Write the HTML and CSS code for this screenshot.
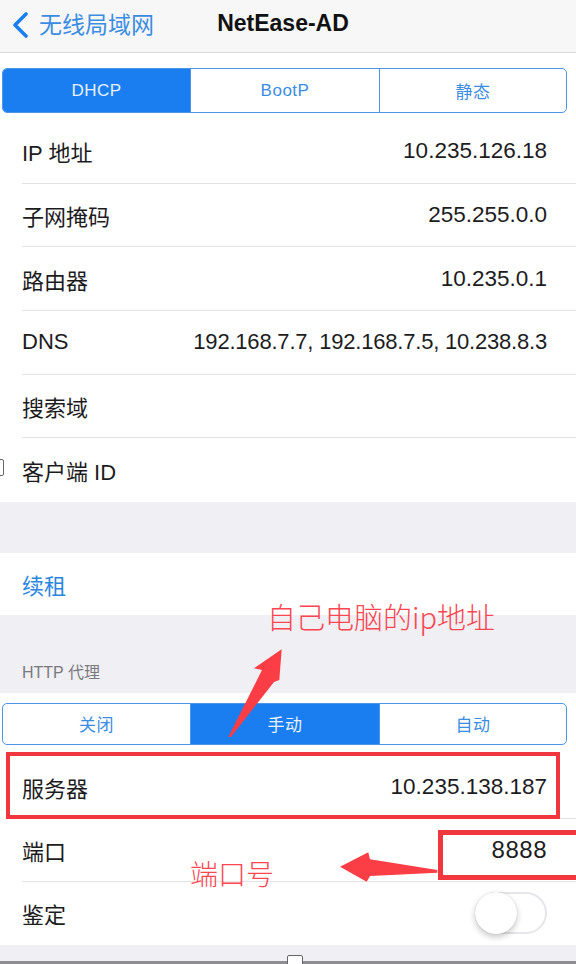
FILE: index.html
```html
<!DOCTYPE html>
<html lang="zh-CN">
<head>
    <meta charset="UTF-8" />
    <meta name="viewport" content="width=device-width, initial-scale=1.0" />
    <title>NetEase-AD</title>
    <link rel="stylesheet" href="styles.css">
</head>
<body>
    <div class="screen">

        <header class="nav">
            <a class="back" href="#">
                <svg class="chevron" width="18" height="26" viewBox="0 0 18 26">
                    <polyline points="14,2 3,13 14,24" fill="none" stroke="#1a7ff0" stroke-width="3.6" stroke-linecap="round" stroke-linejoin="round" />
                </svg>
                <span>无线局域网</span>
            </a>
            <h1 class="title">NetEase-AD</h1>
            <span></span>
        </header>

        <section class="group group-top">
            <div class="seg">
                <span class="seg-item active">DHCP</span>
                <span class="seg-item">BootP</span>
                <span class="seg-item">静态</span>
            </div>
            <div class="rows rows-top">
                <div class="row"><span class="label">IP 地址</span><span class="value">10.235.126.18</span></div>
                <div class="row"><span class="label">子网掩码</span><span class="value">255.255.0.0</span></div>
                <div class="row"><span class="label">路由器</span><span class="value">10.235.0.1</span></div>
                <div class="row"><span class="label">DNS</span><span class="value dns">192.168.7.7, 192.168.7.5, 10.238.8.3</span></div>
                <div class="row"><span class="label">搜索域</span></div>
                <div class="row"><span class="edge-box"></span><span class="label">客户端 ID</span></div>
            </div>
        </section>

        <div class="gap"></div>

        <section class="group">
            <div class="row row-link"><span class="label link">续租</span></div>
        </section>

        <div class="section-head">HTTP 代理</div>

        <section class="group group-proxy">
            <div class="seg seg-small">
                <span class="seg-item">关闭</span>
                <span class="seg-item active">手动</span>
                <span class="seg-item">自动</span>
            </div>
            <div class="rows rows-proxy">
                <div class="row"><span class="label">服务器</span><span class="value">10.235.138.187</span></div>
                <div class="row"><span class="label">端口</span><span class="value port">8888</span></div>
                <div class="row">
                    <span class="label">鉴定</span>
                    <span class="switch"><span class="knob"></span></span>
                </div>
            </div>
        </section>

        <div class="bottom"><span class="thumb"></span></div>

        <!-- annotations drawn over the screenshot -->
        <div class="mark mark-server"></div>
        <div class="mark mark-port"></div>
        <div class="note note-ip">自己电脑的ip地址</div>
        <div class="note note-port">端口号</div>
        <svg class="arrows" width="576" height="964" viewBox="0 0 576 964">
            <polygon points="281.7,649.3 254,668.3 262,670 228.3,737 231,737 274,682 279.3,680" />
            <polygon points="340,866.7 368.3,852.3 370,859.3 437.3,870 437.3,872.7 370,876 366.7,881.7" />
        </svg>
    </div>
</body>
</html>
```
FILE: styles.css
```css
body {
    margin: 0;
    background-color: #efeff4;
    font-family: "Liberation Sans", "Noto Sans CJK SC", sans-serif;
    color: #1c1c1e;
}

.screen {
    position: relative;
    width: 576px;
    height: 964px;
    overflow: hidden;
    background-color: #efeff4;
}

/* top bar */
.nav {
    display: grid;
    grid-template-columns: 1fr auto 1fr;
    align-items: center;
    height: 52px;
    padding: 0 0 0 12px;
    background-color: #f7f7f8;
    border-bottom: 1px solid #d9d9dc;
}

.back {
    display: flex;
    align-items: center;
    gap: 9px;
    color: #3b8de2;
    font-size: 23px;
    text-decoration: none;
    padding-bottom: 6px;
}

.chevron {
    display: block;
    margin-top: 4px;
}

.title {
    margin: 0 22px 0 0;
    padding-bottom: 6px;
    font-size: 23px;
    font-weight: 600;
    color: #111;
}

/* groups */
.group {
    background-color: #fff;
}

.group-top {
    padding-top: 15px;
}

.group-proxy {
    padding-top: 10px;
}

.seg {
    display: grid;
    grid-template-columns: 187px 189px 1fr;
    height: 45px;
    margin: 0 9px 0 2px;
    border: 1.5px solid #4d95e6;
    border-radius: 5px;
    box-sizing: border-box;
    overflow: hidden;
}

.seg-small {
    height: 42px;
}

.seg-item {
    display: flex;
    align-items: center;
    justify-content: center;
    font-size: 17px;
    letter-spacing: 0.5px;
    color: #3b8de2;
    border-left: 1.5px solid #4d95e6;
}

.seg-item:first-child {
    border-left: none;
}

.seg-item.active {
    background-color: #1b7ef0;
    color: #e8f1ff;
}

.rows-top {
    margin-top: 7px;
}

.rows-proxy {
    margin-top: 11px;
}

.row {
    position: relative;
    display: flex;
    align-items: center;
    justify-content: space-between;
    height: 63px;
    margin-left: 22px;
    padding-right: 29px;
    border-bottom: 1px solid #e3e3e7;
    box-sizing: border-box;
    font-size: 22px;
}

.rows-top .row {
    height: 63.67px;
}

.rows .row:last-child {
    border-bottom: none;
}

.row-link {
    height: 62px;
    border-bottom: none;
}

.label {
    color: #1c1c1e;
}

.link {
    color: #2a86e0;
}

.value {
    font-size: 22.5px;
    color: #1c1c1e;
}

.dns {
    font-size: 22px;
    letter-spacing: -0.2px;
}

.port {
    font-size: 24px;
    letter-spacing: 0.5px;
}

.edge-box {
    position: absolute;
    left: -25px;
    top: 21px;
    width: 5px;
    height: 15px;
    border: 1.5px solid #666;
    border-radius: 2px;
}

.gap {
    height: 51px;
}

.section-head {
    height: 78px;
    box-sizing: border-box;
    padding: 48px 0 0 22px;
    line-height: 20px;
    font-size: 16px;
    color: #7a7a7e;
}

/* switch */
.switch {
    position: relative;
    width: 72px;
    height: 42px;
    border: 2px solid #e5e5ea;
    border-radius: 21px;
    box-sizing: border-box;
    background-color: #fff;
}

.knob {
    position: absolute;
    left: -2px;
    top: -2px;
    width: 42px;
    height: 42px;
    border-radius: 50%;
    background-color: #fff;
    box-shadow: 0 3px 6px rgba(0, 0, 0, 0.22), 0 0 1px rgba(0, 0, 0, 0.2);
}

.bottom {
    position: relative;
    height: 19px;
    border-bottom: 3px solid #8e8e92;
    box-sizing: border-box;
}

.thumb {
    position: absolute;
    left: 287px;
    top: 10px;
    width: 14px;
    height: 10px;
    background-color: #fff;
    border: 1px solid #666;
    border-radius: 2px 2px 0 0;
}

/* annotations */
.mark {
    position: absolute;
    box-sizing: border-box;
    border: 4px solid #f0373d;
}

.mark-server {
    left: 6px;
    top: 752px;
    width: 554px;
    height: 67px;
}

.mark-port {
    left: 438px;
    top: 830px;
    width: 150px;
    height: 50px;
    border-width: 5px;
}

.note {
    position: absolute;
    color: #fd4650;
    font-weight: 300;
    font-family: "Noto Sans CJK SC", "Liberation Sans", sans-serif;
    line-height: 1;
    white-space: nowrap;
}

.note-ip {
    left: 267px;
    top: 602px;
    font-size: 29px;
}

.note-port {
    left: 190px;
    top: 859px;
    font-size: 28px;
}

.arrows {
    position: absolute;
    left: 0;
    top: 0;
    pointer-events: none;
}

.arrows polygon {
    fill: #fb3d45;
}
```
